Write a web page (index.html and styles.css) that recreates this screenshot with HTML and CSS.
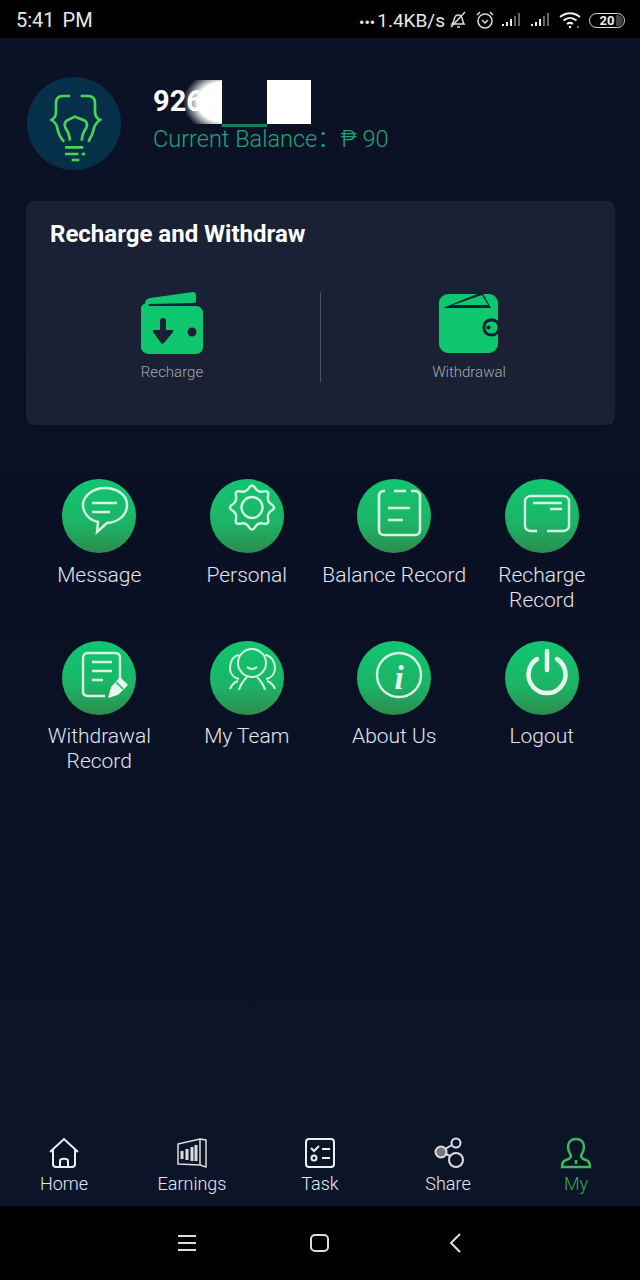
FILE: index.html
```html
<!DOCTYPE html>
<html lang="en">
<head>
  <meta charset="UTF-8" />
  <meta name="viewport" content="width=device-width, initial-scale=1.0" />
  <title>My Account</title>
  <link rel="stylesheet" href="styles.css">
</head>
<body>

  <div class="status-bar">
    <span class="clock">5:41 PM</span>
    <div class="status-right">
      <span class="dots">•••</span><span class="speed">1.4KB/s</span>
      <svg class="st-bell" width="20" height="20" viewBox="0 0 20 20" fill="none" stroke="#ddd" stroke-width="1.500">
        <path d="M4 14c2-2 2-5 3-7s4-3 6-1 1 5 3 8z"/><path d="M3 17 17 2"/><path d="M9 17h3"/>
      </svg>
      <svg class="st-alarm" width="20" height="20" viewBox="0 0 20 20" fill="none" stroke="#ddd" stroke-width="1.500">
        <circle cx="10" cy="11" r="7"/><path d="M7 10l3 3 3-3"/><path d="M2 5l3-3M18 5l-3-3"/>
      </svg>
      <svg class="st-signal" width="22" height="16" viewBox="0 0 22 16">
        <g fill="#e8e8e8"><rect x="1" y="12" width="2" height="2"/><rect x="5" y="10" width="2" height="4"/><rect x="9" y="7" width="2" height="7"/></g>
        <g fill="#666"><rect x="13" y="4" width="2" height="10"/><rect x="17" y="1" width="2" height="13"/></g>
      </svg>
      <svg class="st-signal2" width="22" height="16" viewBox="0 0 22 16">
        <g fill="#e8e8e8"><rect x="1" y="12" width="2" height="2"/><rect x="5" y="10" width="2" height="4"/><rect x="9" y="7" width="2" height="7"/></g>
        <g fill="#666"><rect x="13" y="4" width="2" height="10"/><rect x="17" y="1" width="2" height="13"/></g>
      </svg>
      <svg class="st-wifi" width="24" height="18" viewBox="0 0 24 18" fill="none" stroke="#eee" stroke-width="2">
        <path d="M2 6c6-5 14-5 20 0"/><path d="M5.500 9.500c4-3.500 9-3.500 13 0"/><path d="M9 13c2-1.500 4-1.500 6 0"/>
        <circle cx="12" cy="16" r="1.200" fill="#eee" stroke="none"/><circle cx="20" cy="16" r="1" fill="#999" stroke="none"/>
      </svg>
      <div class="battery"><span>20</span><i></i></div>
    </div>
  </div>

  <div class="page">
    <div class="profile">
      <div class="avatar">
        <svg width="94" height="93" viewBox="21 21 282 279" fill="none" stroke="#45d652" stroke-width="8">
          <path d="M150 78H128Q108 78 108 100V125Q108 142 95 150Q110 160 112 175Q115 195 132 215"/>
          <path d="M182 78H205Q225 78 225 100V125Q225 142 240 150Q225 160 222 175Q218 195 205 215"/>
          <path d="M150 212Q148 190 137 175Q130 160 140 152L165 140 195 152Q205 160 198 175Q187 190 185 212"/>
          <path d="M135 232H190M135 252H175M185 252H195M155 270H178"/>
        </svg>
      </div>
      <div class="user-info">
        <div class="phone">926</div>
        <div class="balance">Current Balance：₱ 90</div>
        <div class="mask-fade"></div>
        <div class="mask-gap"></div>
        <div class="mask-white"></div>
      </div>
    </div>

    <div class="card">
      <h2 class="card-title">Recharge and Withdraw</h2>
      <div class="card-row">
        <div class="card-item">
          <svg width="62" height="62" viewBox="0 0 62 62">
            <path fill="#0fc76f" d="M4 12c0-3 1-5 5-6L52 0c2 0 3 1 3 3v6c0 1-1 2-2 2L9 12c-2 0-2 2 0 2h46c4 0 7 3 7 7v34c0 4-3 7-7 7H8c-4 0-8-3-8-7V16c0-2 2-4 4-4z"/>
            <path fill="#1a2134" d="M19 29c0-2 1-3 3-3s3 1 3 3v9h6c1 0 2 1 1 2L23 51c-1 1-2 1-3 0L12 40c-1-1 0-2 1-2h6z"/>
            <circle cx="51" cy="40" r="4.500" fill="#1a2134"/>
          </svg>
          <span class="item-label">Recharge</span>
        </div>
        <div class="card-divider"></div>
        <div class="card-item">
          <svg width="62" height="62" viewBox="0 0 62 62">
            <rect x="1" y="2" width="59" height="59" rx="9" fill="#0fc76f"/>
            <path fill="#122030" d="M5 16 44 0l9 16z"/>
            <path fill="#0fc76f" d="M15 13 44 3l6 10z"/>
            <rect x="46" y="28" width="15" height="15" rx="7" fill="#0fc76f" stroke="#122030" stroke-width="3"/>
            <circle cx="50.500" cy="35.500" r="2" fill="#122030"/>
          </svg>
          <span class="item-label">Withdrawal</span>
        </div>
      </div>
    </div>

    <div class="menu-grid">
      <div class="menu-item">
        <div class="menu-icon">
          <svg width="74" height="74" viewBox="0 0 74 74" fill="none" stroke="#d6f7e4" stroke-width="2.400">
            <path d="M36 43 35 53 45 44C58 43 65 35 65 26 65 16 55 9 43 9 31 9 21 17 21 26 21 34 27 41 36 43z"/>
            <path d="M30 24H55M30 33H48"/>
          </svg>
        </div>
        <span class="menu-label">Message</span>
      </div>
      <div class="menu-item">
        <div class="menu-icon">
          <svg width="74" height="74" viewBox="0 0 74 74" fill="none" stroke="#d6f7e4" stroke-width="2.400">
            <g transform="translate(42 28.500)">
              <path d="M19.650-3.050Q24.500 0 19.650 3.050Q14.800 6.100 16.050 11.700Q17.300 17.300 11.700 16.050Q6.100 14.800 3.050 19.650Q0 24.500-3.050 19.650Q-6.100 14.800-11.700 16.050Q-17.300 17.300-16.050 11.700Q-14.800 6.100-19.650 3.050Q-24.500 0-19.650-3.050Q-14.800-6.100-16.050-11.700Q-17.300-17.300-11.700-16.050Q-6.100-14.800-3.050-19.650Q0-24.500 3.050-19.650Q6.100-14.800 11.700-16.050Q17.300-17.300 16.050-11.700Q14.800-6.100 19.650-3.050z"/>
              <circle r="10.500"/>
            </g>
          </svg>
        </div>
        <span class="menu-label">Personal</span>
      </div>
      <div class="menu-item">
        <div class="menu-icon">
          <svg width="74" height="74" viewBox="0 0 74 74" fill="none" stroke="#d6f7e4" stroke-width="2.600">
            <path d="M37 12H49"/>
            <path d="M28 12H27C24 12 22 14 22 17V51C22 54 24 56 27 56H58C61 56 63 54 63 51V17C63 14 61 12 58 12H54"/>
            <path d="M31 29H53M31 41H46"/>
          </svg>
        </div>
        <span class="menu-label">Balance Record</span>
      </div>
      <div class="menu-item">
        <div class="menu-icon">
          <svg width="74" height="74" viewBox="0 0 74 74" fill="none" stroke="#d6f7e4" stroke-width="2.400">
            <path d="M32 52H26C23 52 20 50 20 47V22C20 19 23 17 26 17H58C61 17 64 19 64 22V47C64 50 61 52 58 52H42"/>
            <path d="M28 24H57M45 30H57"/>
          </svg>
        </div>
        <span class="menu-label">Recharge Record</span>
      </div>
      <div class="menu-item">
        <div class="menu-icon">
          <svg width="74" height="74" viewBox="0 0 74 74" fill="none" stroke="#d6f7e4" stroke-width="2.400">
            <path d="M43 55H26C23 55 21 53 21 50V17C21 14 23 12 26 12H53C56 12 58 14 58 17V37"/>
            <path d="M30 21H50M30 30H50M30 39H41"/>
            <path d="M47 56 50 46 58 37 65 44 56 53z" fill="#e6f8ed" stroke="#e6f8ed" stroke-width="1.500" stroke-linejoin="round"/>
            <path d="M54 41 61 48" stroke="#1fae68" stroke-width="1.500"/>
          </svg>
        </div>
        <span class="menu-label">Withdrawal Record</span>
      </div>
      <div class="menu-item">
        <div class="menu-icon">
          <svg width="74" height="74" viewBox="0 0 74 74" fill="none" stroke="#d6f7e4" stroke-width="2">
            <circle cx="42" cy="22" r="14"/>
            <path d="M29 14C22 15 20 22 20 27 20 33 24 37 29 38M20 48C22 43 25 41 28 40"/>
            <path d="M55 14C62 15 65 22 65 27 65 33 61 37 56 38M65 48C63 43 60 41 57 40"/>
            <path d="M29 49C31 42 35 38 37 36M55 49C53 42 49 38 47 36M37 26Q42 30 47 26"/>
          </svg>
        </div>
        <span class="menu-label">My Team</span>
      </div>
      <div class="menu-item">
        <div class="menu-icon">
          <svg width="74" height="74" viewBox="0 0 74 74" fill="none" stroke="#d6f7e4" stroke-width="2.400">
            <circle cx="42" cy="34" r="22"/>
            <text class="info-i" x="42" y="48" text-anchor="middle">i</text>
          </svg>
        </div>
        <span class="menu-label">About Us</span>
      </div>
      <div class="menu-item">
        <div class="menu-icon">
          <svg width="74" height="74" viewBox="0 0 74 74" fill="none" stroke="#e6f8ed" stroke-width="4.500" stroke-linecap="round">
            <path d="M32 18A18.500 18.500 0 1 0 52 18"/>
            <path d="M42 10V29"/>
          </svg>
        </div>
        <span class="menu-label">Logout</span>
      </div>
    </div>
  </div>

  <div class="tabbar">
    <div class="tab">
      <svg width="32" height="32" viewBox="0 0 32 32" fill="none" stroke="#eee" stroke-width="2">
        <path d="M2 15 16 2l14 13"/><path d="M5 13v14c0 2 1 3 3 3h16c2 0 3-1 3-3V13"/><path d="M12 30v-6c0-3 8-3 8 0v6"/>
      </svg>
      <span>Home</span>
    </div>
    <div class="tab">
      <svg width="32" height="32" viewBox="0 0 32 32" fill="none" stroke="#ddd" stroke-width="1.500">
        <path d="M2 7l22-5 6 1v27l-6-2L2 27z"/><path d="M24 2v26"/>
        <path d="M6 14v8M11 12v11M16 10v14M20 8v16" stroke-width="3"/>
      </svg>
      <span>Earnings</span>
    </div>
    <div class="tab">
      <svg width="32" height="32" viewBox="0 0 32 32" fill="none" stroke="#eee" stroke-width="2">
        <rect x="2" y="2" width="28" height="28" rx="3"/>
        <path d="M7 11l3 3 5-5M18 12h8M18 21h8"/><circle cx="10" cy="21" r="2.500"/>
      </svg>
      <span>Task</span>
    </div>
    <div class="tab">
      <svg width="32" height="32" viewBox="0 0 32 32" fill="none" stroke="#ddd" stroke-width="2">
        <circle cx="9" cy="15" r="5.500" fill="#777"/><circle cx="24" cy="6" r="4.500"/><circle cx="24" cy="23" r="7"/>
        <path d="M13 12l7-4M14 17l4 2"/>
      </svg>
      <span>Share</span>
    </div>
    <div class="tab tab-active">
      <svg width="32" height="32" viewBox="0 0 32 32" fill="none" stroke="#3fb75a" stroke-width="2.500">
        <path d="M16 2c-5 0-8 3-8 8 0 4 2 6 3 9 0 2-2 3-5 4-3 1-4 3-4 7h28c0-4-1-6-4-7-3-1-5-2-5-4 1-3 3-5 3-9 0-5-3-8-8-8z"/>
        <path d="M16 23v4"/>
      </svg>
      <span>My</span>
    </div>
  </div>

  <div class="nav-bar">
    <svg class="nav-menu" width="18" height="16" viewBox="0 0 18 16" stroke="#ddd" stroke-width="2">
      <path d="M0 1h18M0 8h18M0 15h18"/>
    </svg>
    <div class="nav-home"></div>
    <svg class="nav-back" width="12" height="20" viewBox="0 0 12 20" fill="none" stroke="#ddd" stroke-width="2">
      <path d="M11 1 2 10l9 9"/>
    </svg>
  </div>

</body>
</html>
```

FILE: styles.css
```css
* {
  box-sizing: border-box;
}

body {
  margin: 0;
  height: 1280px;
  width: 640px;
  display: flex;
  flex-direction: column;
  overflow: hidden;
  font-family: Roboto, "Liberation Sans", "Noto Sans CJK SC", sans-serif;
  background-color: #0a1024;
  color: #fff;
}

/* status bar */
.status-bar {
  height: 38px;
  background-color: #000;
  display: flex;
  justify-content: space-between;
  align-items: center;
  padding: 2px 15px 0 16px;
  color: #e8e8e8;
}

.clock {
  font-size: 20px;
  word-spacing: 3px;
}

.status-right {
  display: flex;
  align-items: center;
  font-size: 19px;
}

.dots {
  font-size: 16px;
  margin-top: 5px;
  margin-right: 2px;
}

.st-bell {
  margin-left: 3px;
}

.st-alarm {
  margin-left: 7px;
}

.st-signal {
  margin-left: 6px;
}

.st-signal2 {
  margin-left: 7px;
}

.st-wifi {
  margin-left: 6px;
}

.battery {
  margin-left: 7px;
  width: 36px;
  height: 15px;
  border: 1.500px solid #ddd;
  border-radius: 8px;
  display: flex;
  align-items: center;
  justify-content: center;
  font-size: 13px;
  font-weight: 700;
  position: relative;
}

.battery i {
  position: absolute;
  right: 1px;
  top: 1px;
  bottom: 1px;
  width: 7px;
  background-color: #444;
  border-radius: 0 6px 6px 0;
}

/* main area */
.page {
  flex: 1;
  padding: 39px 25px 0 25px;
  background: linear-gradient(#0c1225, #0a1023 50%, #0c1428);
}

.profile {
  display: flex;
  align-items: center;
  padding-left: 2px;
  height: 93px;
}

.avatar {
  width: 94px;
  height: 93px;
  border-radius: 50%;
  background-color: #06304a;
  flex-shrink: 0;
}

.avatar svg {
  display: block;
}

.user-info {
  position: relative;
  margin-left: 32px;
  height: 93px;
  flex: 1;
  padding-top: 6px;
}

.phone {
  font-size: 29px;
  font-weight: 700;
  line-height: 36px;
}

.balance {
  margin-top: 5px;
  font-size: 23.500px;
  font-weight: 300;
  line-height: 30px;
  color: #1fa477;
}

/* covers drawn over the account number */
.mask-fade {
  position: absolute;
  left: 30px;
  top: 3px;
  width: 39px;
  height: 44px;
  background: radial-gradient(ellipse 100% 72% at 100% 50%, #fff 62%, rgba(255, 255, 255, 0) 100%);
}

.mask-gap {
  position: absolute;
  left: 69px;
  top: 3px;
  width: 45px;
  height: 47px;
  background: linear-gradient(#0c1225 0, #0c1225 44px, #12835a 44px);
}

.mask-white {
  position: absolute;
  left: 114px;
  top: 3px;
  width: 44px;
  height: 44px;
  background-color: #fff;
}

.card {
  margin-top: 31px;
  margin-left: 1px;
  height: 224px;
  background-color: #1a2134;
  border-radius: 8px;
  padding: 18px 24px 0 24px;
}

.card-title {
  margin: 0;
  font-size: 24px;
  font-weight: 700;
  line-height: 30px;
}

.card-row {
  display: flex;
  margin: 43px -24px 0 -24px;
  height: 90px;
}

.card-item {
  flex: 1;
  display: flex;
  flex-direction: column;
  align-items: center;
}

.card-item:first-child {
  padding-right: 2px;
}

.card-item:last-child {
  padding-left: 2px;
}

.card-divider {
  width: 1px;
  background-color: #4a5061;
}

.item-label {
  margin-top: 9px;
  font-size: 15px;
  font-weight: 300;
  line-height: 18px;
  color: #a4a8b4;
}

.menu-grid {
  margin-top: 54px;
  margin-left: 0.500px;
  display: grid;
  grid-template-columns: repeat(4, 147.500px);
  grid-auto-rows: 162px;
}

.menu-item {
  display: flex;
  flex-direction: column;
  align-items: center;
  text-align: center;
}

.menu-item:nth-child(n+5) .menu-label {
  margin-top: 9px;
}

.menu-icon {
  width: 74px;
  height: 74px;
  border-radius: 50%;
  background: linear-gradient(#11c670 0, #1cb466 60%, #2d8c4d 100%);
  flex-shrink: 0;
}

.menu-icon svg {
  display: block;
}

.info-i {
  font-family: "Liberation Serif", serif;
  font-size: 33px;
  font-weight: 700;
  font-style: italic;
  fill: #e6f8ed;
  stroke: none;
}

.menu-label {
  margin-top: 10px;
  font-size: 21px;
  font-weight: 300;
  line-height: 25px;
  color: #e3e6ee;
}

/* bottom tabs */
.tabbar {
  height: 78px;
  display: flex;
  background-color: #0c1428;
  padding-top: 9px;
}

.tab {
  flex: 1;
  display: flex;
  flex-direction: column;
  align-items: center;
  font-size: 18px;
  font-weight: 300;
  color: #e6e8ee;
}

.tab svg {
  display: block;
}

.tab span {
  margin-top: 3px;
  line-height: 24px;
}

.tab-active {
  color: #3fa85a;
}

/* system navigation */
.nav-bar {
  height: 74px;
  background-color: #000;
  display: flex;
  align-items: center;
  padding-left: 178px;
}

.nav-home {
  width: 19px;
  height: 18px;
  margin-left: 114px;
  border: 2px solid #ddd;
  border-radius: 5px;
}

.nav-back {
  margin-left: 120px;
}
```
